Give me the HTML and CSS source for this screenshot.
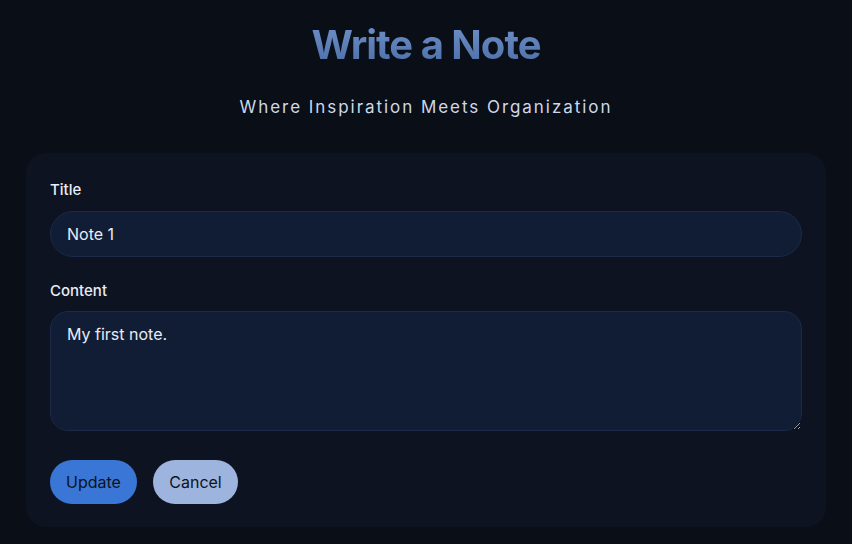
FILE: index.html
```html
<!DOCTYPE html>
<html lang="en">
<head>
<meta charset="utf-8">
<title>Write a Note</title>
<link rel="stylesheet" href="styles.css">
</head>
<body>
<main class="page">
  <header class="hero">
    <h1 class="hero-title">Write a Note</h1>
    <p class="hero-sub">Where Inspiration Meets Organization</p>
  </header>
  <form class="card">
    <div class="field">
      <label class="label" for="title">Title</label>
      <input class="input" id="title" type="text" value="Note 1">
    </div>
    <div class="field">
      <label class="label" for="content">Content</label>
      <textarea class="textarea" id="content">My first note.</textarea>
    </div>
    <div class="actions">
      <button type="button" class="btn btn-primary">Update</button>
      <button type="button" class="btn btn-secondary">Cancel</button>
    </div>
  </form>
</main>
</body>
</html>
```
FILE: styles.css
```css
* { box-sizing: border-box; }
html, body { margin: 0; padding: 0; }
body {
  background: #0a0e16;
  font-family: Inter, "Noto Sans", sans-serif;
  color: #e6ecf5;
  width: 852px;
  height: 544px;
  overflow: hidden;
}
.page {
  padding: 20px 26px 0;
  display: flex;
  flex-direction: column;
  align-items: stretch;
}
.hero {
  text-align: center;
}
.hero-title {
  margin: 0;
  font-size: 40px;
  font-weight: 700;
  letter-spacing: -1px;
  line-height: 50px;
  background: linear-gradient(180deg, #7193cb 0%, #4a6ba5 100%);
  -webkit-background-clip: text;
  background-clip: text;
  color: transparent;
}
.hero-sub {
  margin: 25px 0 0;
  font-size: 17px;
  letter-spacing: 1.95px;
  line-height: 24px;
  color: #cdd8ea;
}
.card {
  margin-top: 34px;
  background: #0d1320;
  border-radius: 20px;
  padding: 27px 24px 23px;
  display: flex;
  flex-direction: column;
}
.field {
  display: flex;
  flex-direction: column;
  margin-bottom: 24px;
}
.label {
  font-size: 15px;
  font-weight: 500;
  line-height: 20px;
  color: #e8edf5;
  margin-bottom: 11px;
}
.field + .field .label { margin-bottom: 10px; }
.input, .textarea {
  font-family: inherit;
  font-size: 16px;
  color: #e6ecf5;
  background: #111d35;
  border: 1px solid #1a2a48;
  outline: none;
}
.input {
  height: 46px;
  border-radius: 23px;
  padding: 0 16px;
}
.textarea {
  height: 120px;
  border-radius: 18px;
  padding: 12px 16px;
  resize: vertical;
  line-height: 20px;
}
.actions {
  display: flex;
  gap: 16px;
  margin-top: 5px;
}
.btn {
  height: 44px;
  border: none;
  border-radius: 22px;
  font-family: inherit;
  font-size: 16px;
  color: #0d1320;
  padding: 0 16px;
}
.btn-primary { background: #3a76d6; width: 87px; }
.btn-secondary { background: #9db4de; width: 85px; }
```
